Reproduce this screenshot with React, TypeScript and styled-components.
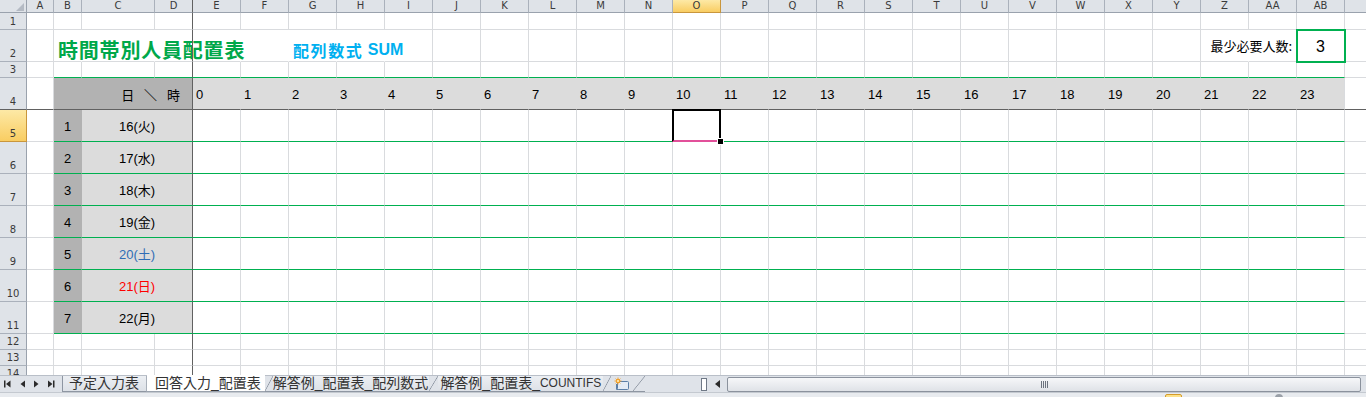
import React from 'react';
import styled, { createGlobalStyle, css } from 'styled-components';

const GRID = '#d9dbde';
const GREEN = '#00b050';
const FREEZE = '#616161';
const DARK = '#b2b2b2';
const LIGHT = '#dcdcdc';
const HEAD_BG = '#dfe3e8';
const HEAD_LINE = '#aab1bb';
const HEAD_EDGE = '#9aa2ad';
const ACTIVE_EDGE = '#c9963c';
const SANS = `"Liberation Sans", "Noto Sans CJK JP", sans-serif`;
const CJK = `"Noto Sans CJK JP", "Liberation Sans", sans-serif`;

const GlobalStyle = createGlobalStyle`
  html, body { margin: 0; padding: 0; background: #fff; overflow: hidden; }
  body { font-family: ${SANS}; }
`;

const Window = styled.div`
  width: 1366px;
  height: 397px;
  display: flex;
  flex-direction: column;
  overflow: hidden;
  background: #fff;
`;

const SheetViewport = styled.div`
  flex: none;
  height: 375px;
  overflow: hidden;
`;

const Grid = styled.div`
  display: grid;
  grid-template-columns: 27px 27px 28px 73px 38px repeat(24, 48px) 80px;
  grid-template-rows: 13px 17px 32px 16px 32px repeat(7, 32px) repeat(3, 16px);
  width: max-content;
`;

const headerBase = css`
  box-sizing: border-box;
  background: ${HEAD_BG};
  color: #3a3a3a;
  font-family: "DejaVu Sans", sans-serif;
  font-size: 10px;
  line-height: 1;
  display: flex;
`;

const activeHead = css`
  background: linear-gradient(#fde9a6, #f9cd62);
`;

const Corner = styled.div`
  ${headerBase};
  border-right: 1px solid ${HEAD_EDGE};
  border-bottom: 1px solid ${HEAD_EDGE};
  align-items: flex-end;
  justify-content: flex-end;
  padding: 0 2px 1px 0;
`;

const ColHead = styled.div<{ $active?: boolean; $freeze?: boolean }>`
  ${headerBase};
  align-items: center;
  justify-content: center;
  border-right: 1px solid ${p => (p.$freeze ? FREEZE : p.$active ? ACTIVE_EDGE : HEAD_LINE)};
  border-bottom: 1px solid ${p => (p.$active ? ACTIVE_EDGE : HEAD_EDGE)};
  ${p => p.$active && activeHead}
`;

const RowHead = styled.div<{ $active?: boolean; $freeze?: boolean }>`
  ${headerBase};
  align-items: flex-end;
  justify-content: center;
  padding-bottom: 2px;
  border-right: 1px solid ${p => (p.$active ? ACTIVE_EDGE : HEAD_EDGE)};
  border-bottom: 1px solid ${p => (p.$freeze ? FREEZE : p.$active ? ACTIVE_EDGE : HEAD_LINE)};
  ${p => p.$active && activeHead}
`;

type CellProps = { $bg?: string; $br?: string; $bb?: string; $span?: number; $front?: boolean };

const Cell = styled.div<CellProps>`
  box-sizing: border-box;
  min-width: 0;
  display: flex;
  align-items: center;
  background: ${p => p.$bg ?? 'transparent'};
  border-right: 1px solid ${p => p.$br ?? GRID};
  border-bottom: 1px solid ${p => p.$bb ?? GRID};
  grid-column: span ${p => p.$span ?? 1};
  white-space: nowrap;
  font-size: 13px;
  line-height: 1;
  color: #000;
  ${p => p.$front && css`position: relative; z-index: 1;`}
`;

const TitleCell = styled(Cell)`
  align-items: flex-end;
  padding: 0 0 1px 4px;
  font-family: ${CJK};
  font-weight: 700;
  font-size: 20px;
  letter-spacing: 0.8px;
  color: #00a84a;
`;

const SubTitleCell = styled(Cell)`
  align-items: flex-end;
  padding: 0 0 3px 4px;
  font-weight: 700;
  font-size: 16px;
  color: #00b0f0;
`;

const WideKana = styled.span`
  font-family: ${CJK};
  letter-spacing: 1.6px;
`;

const LabelCell = styled(Cell)`
  justify-content: flex-end;
  padding-right: 4px;
  font-family: ${CJK};
`;

const CountBox = styled(Cell)`
  justify-content: center;
  padding-top: 2px;
  font-size: 16px;
  outline: 2px solid ${GREEN};
  outline-offset: -1px;
  position: relative;
  z-index: 2;
`;

const AxisLabel = styled(Cell)`
  justify-content: flex-end;
  padding: 2px 12px 0 0;
  font-family: ${CJK};
  word-spacing: 7px;
`;

const HourCell = styled(Cell)`
  padding: 2px 0 0 3px;
`;

const IndexCell = styled(Cell)`
  justify-content: center;
  padding-top: 2px;
`;

const DateCell = styled(Cell)<{ $color?: string }>`
  justify-content: center;
  padding-top: 2px;
  color: ${p => p.$color ?? '#000'};
`;

const SelectedCell = styled(Cell)`
  position: relative;
  z-index: 2;
  &::after {
    content: '';
    position: absolute;
    top: -1px;
    left: -1px;
    right: -1px;
    bottom: -1px;
    border: 2px solid #000;
    border-bottom-color: #e2509a;
  }
  &::before {
    content: '';
    position: absolute;
    right: -4px;
    bottom: -4px;
    width: 5px;
    height: 5px;
    background: #000;
    border: 1px solid #fff;
    z-index: 1;
  }
`;

/* ---------- tab bar ---------- */

const TabStrip = styled.div`
  flex: none;
  height: 17px;
  box-sizing: border-box;
  display: flex;
  align-items: stretch;
  background: #dfe3e9;
  border-top: 1px solid #b9bfc8;
  font-family: ${SANS};
  font-size: 14px;
  line-height: 1;
  color: #333;
`;

const NavArea = styled.div`
  flex: none;
  width: 62px;
  display: flex;
  align-items: center;
`;

const SheetTab = styled.div<{ $active?: boolean; $pl: number; $pr: number }>`
  flex: none;
  box-sizing: border-box;
  display: flex;
  align-items: center;
  padding: 0 ${p => p.$pr}px 1px ${p => p.$pl}px;
  white-space: nowrap;
  background: ${p => (p.$active ? '#fff' : 'linear-gradient(#eceff3, #dde1e7)')};
  border-bottom: 1px solid #8e96a2;
  ${p => p.$active && css`margin-top: -1px; border-bottom-color: #9aa2ad;`}
`;

const FirstTab = styled(SheetTab)`
  border-left: 1px solid #8e96a2;
  border-right: 1px solid #a9b0ba;
`;

const LatinPart = styled.span`
  font-size: 12px;
`;

const Slant = styled.span<{ $w: number }>`
  flex: none;
  width: ${p => p.$w}px;
  border-bottom: 1px solid #8e96a2;
  background: linear-gradient(
    to bottom right,
    transparent calc(50% - 0.7px),
    #8e96a2 50%,
    transparent calc(50% + 0.7px)
  );
`;

const NewTab = styled.div`
  flex: none;
  width: 22px;
  display: flex;
  align-items: center;
  justify-content: center;
  border-bottom: 1px solid #8e96a2;
`;

const Spacer = styled.div`
  flex: 1;
`;

const Splitter = styled.div`
  flex: none;
  width: 6px;
  height: 13px;
  align-self: center;
  margin-right: 2px;
  box-sizing: border-box;
  background: #fff;
  border: 1px solid #6f7886;
`;

const ScrollArrow = styled.div`
  flex: none;
  width: 18px;
  display: flex;
  align-items: center;
  justify-content: center;
`;

const ScrollTrack = styled.div`
  flex: none;
  width: 634px;
  box-sizing: border-box;
  margin: 1px 5px 0 0;
  border: 1px solid #8b929d;
  border-radius: 2px;
  background: linear-gradient(#f6f7f9, #dfe2e7);
  display: flex;
  align-items: center;
  justify-content: center;
`;

const Grip = styled.div`
  width: 7px;
  height: 7px;
  background: repeating-linear-gradient(to right, #6c737e 0 1px, transparent 1px 2px);
`;

const StatusStrip = styled.div`
  flex: 1;
  box-sizing: border-box;
  background: #e8ebef;
  border-top: 1px solid #c4c9d0;
  display: flex;
  align-items: flex-start;
  overflow: hidden;
`;

const StatusGap = styled.div<{ $w: number }>`
  flex: none;
  width: ${p => p.$w}px;
`;

const StatusBadge = styled.div`
  flex: none;
  width: 17px;
  height: 8px;
  margin-top: 1px;
  box-sizing: border-box;
  background: #fde28a;
  border: 1px solid #d49b2b;
  border-radius: 2px;
`;

const StatusKnob = styled.div`
  flex: none;
  width: 8px;
  height: 8px;
  margin-top: 1px;
  border-radius: 50%;
  background: #9aa0a8;
`;

const letters = [
  'A', 'B', 'C', 'D', 'E', 'F', 'G', 'H', 'I', 'J', 'K', 'L', 'M', 'N', 'O',
  'P', 'Q', 'R', 'S', 'T', 'U', 'V', 'W', 'X', 'Y', 'Z', 'AA', 'AB', 'AC',
];

const days: { n: number; label: string; color?: string }[] = [
  { n: 1, label: '16(火)' },
  { n: 2, label: '17(水)' },
  { n: 3, label: '18(木)' },
  { n: 4, label: '19(金)' },
  { n: 5, label: '20(土)', color: '#2f6db5' },
  { n: 6, label: '21(日)', color: '#ff0000' },
  { n: 7, label: '22(月)' },
];

const bottomFor = (r: number, i: number) => {
  if (r === 4) return FREEZE;
  if ((r === 3 || (r >= 5 && r <= 11)) && i >= 1 && i <= 27) return GREEN;
  return GRID;
};

const CornerMark = () => (
  <svg width="8" height="8" viewBox="0 0 8 8">
    <polygon points="8,0 8,8 0,8" fill="#b4bac3" />
  </svg>
);

const NavIcons = () => (
  <svg width="62" height="16" viewBox="0 0 62 16">
    <g fill="#2b2b2b">
      <rect x="4" y="4.5" width="1.5" height="7" />
      <polygon points="10.5,4.5 10.5,11.5 6,8" />
      <polygon points="25,4.5 25,11.5 20.5,8" />
      <polygon points="34,4.5 34,11.5 38.5,8" />
      <polygon points="48,4.5 48,11.5 52.5,8" />
      <rect x="53" y="4.5" width="1.5" height="7" />
    </g>
  </svg>
);

const NewSheetIcon = () => (
  <svg width="16" height="14" viewBox="0 0 16 14">
    <rect x="3.5" y="4.5" width="11" height="8" rx="1" fill="#e4ebf4" stroke="#5b7ea6" />
    <path d="M4.5 12.5 L2.5 12.5 L2.5 7" stroke="#5b7ea6" fill="none" />
    <circle cx="4" cy="4" r="2.2" fill="#f2a12c" />
    <path d="M4 0.5 V7.5 M0.5 4 H7.5 M1.6 1.6 L6.4 6.4 M6.4 1.6 L1.6 6.4" stroke="#f2a12c" strokeWidth="0.9" />
    <circle cx="4" cy="4" r="1" fill="#fff3c4" />
  </svg>
);

const LeftArrowIcon = () => (
  <svg width="6" height="8" viewBox="0 0 6 8">
    <polygon points="5,0 5,8 0,4" fill="#2b2b2b" />
  </svg>
);

function buildCells() {
  const out: React.ReactNode[] = [];
  out.push(
    <Corner key="corner">
      <CornerMark />
    </Corner>
  );
  letters.forEach((l, i) =>
    out.push(
      <ColHead key={`h-${l}`} $active={l === 'O'} $freeze={i === 3}>
        {l}
      </ColHead>
    )
  );

  for (let r = 1; r <= 14; r++) {
    out.push(
      <RowHead key={`rh-${r}`} $active={r === 5} $freeze={r === 4}>
        {r}
      </RowHead>
    );

    if (r === 2) {
      letters.forEach((l, i) => {
        const key = `${r}-${l}`;
        if (i === 1)
          out.push(
            <TitleCell key={key} $br="transparent">
              時間帯別人員配置表
            </TitleCell>
          );
        else if (i === 3) out.push(<Cell key={key} $br={FREEZE} $front />);
        else if (i === 2 || i === 4 || i === 5 || i === 7 || i === 25)
          out.push(<Cell key={key} $br="transparent" />);
        else if (i === 6)
          out.push(
            <SubTitleCell key={key} $br="transparent">
              <WideKana>配列数式</WideKana>&nbsp;SUM
            </SubTitleCell>
          );
        else if (i === 26) out.push(<LabelCell key={key}>最少必要人数:</LabelCell>);
        else if (i === 27) out.push(<CountBox key={key}>3</CountBox>);
        else out.push(<Cell key={key} />);
      });
      continue;
    }

    if (r === 4) {
      out.push(<Cell key="4-A" $bb={FREEZE} />);
      out.push(
        <AxisLabel key="4-B" $span={3} $bg={DARK} $br={FREEZE} $bb={FREEZE} $front>
          日 ＼ 時
        </AxisLabel>
      );
      for (let h = 0; h < 24; h++)
        out.push(
          <HourCell key={`4-h${h}`} $bg={LIGHT} $br={h === 23 ? GRID : LIGHT} $bb={FREEZE}>
            {h}
          </HourCell>
        );
      out.push(<Cell key="4-AC" $bb={FREEZE} />);
      continue;
    }

    if (r >= 5 && r <= 11) {
      const d = days[r - 5];
      out.push(<Cell key={`${r}-A`} />);
      out.push(
        <IndexCell key={`${r}-B`} $bg={DARK} $br={DARK} $bb={GREEN}>
          {d.n}
        </IndexCell>
      );
      out.push(
        <DateCell key={`${r}-C`} $span={2} $bg={LIGHT} $br={FREEZE} $bb={GREEN} $color={d.color} $front>
          {d.label}
        </DateCell>
      );
      for (let i = 4; i <= 27; i++) {
        const key = `${r}-${letters[i]}`;
        if (r === 5 && i === 14) out.push(<SelectedCell key={key} $bb={GREEN} />);
        else out.push(<Cell key={key} $bb={GREEN} />);
      }
      out.push(<Cell key={`${r}-AC`} />);
      continue;
    }

    letters.forEach((l, i) =>
      out.push(
        <Cell
          key={`${r}-${l}`}
          $bb={bottomFor(r, i)}
          $br={i === 3 ? FREEZE : GRID}
          $front={i === 3}
        />
      )
    );
  }
  return out;
}

export default function App() {
  return (
    <>
      <GlobalStyle />
      <Window>
        <SheetViewport>
          <Grid>{buildCells()}</Grid>
        </SheetViewport>
        <TabStrip>
          <NavArea>
            <NavIcons />
          </NavArea>
          <FirstTab $pl={6} $pr={7}>予定入力表</FirstTab>
          <SheetTab $active $pl={8} $pr={4}>回答入力_配置表</SheetTab>
          <Slant $w={8} />
          <SheetTab $pl={0} $pr={1}>解答例_配置表_配列数式</SheetTab>
          <Slant $w={9} />
          <SheetTab $pl={2} $pr={2}>
            解答例_配置表_<LatinPart>COUNTIFS</LatinPart>
          </SheetTab>
          <Slant $w={8} />
          <NewTab>
            <NewSheetIcon />
          </NewTab>
          <Slant $w={12} />
          <Spacer />
          <Splitter />
          <ScrollArrow>
            <LeftArrowIcon />
          </ScrollArrow>
          <ScrollTrack>
            <Grip />
          </ScrollTrack>
        </TabStrip>
        <StatusStrip>
          <StatusGap $w={1165} />
          <StatusBadge />
          <StatusGap $w={93} />
          <StatusKnob />
        </StatusStrip>
      </Window>
    </>
  );
}
